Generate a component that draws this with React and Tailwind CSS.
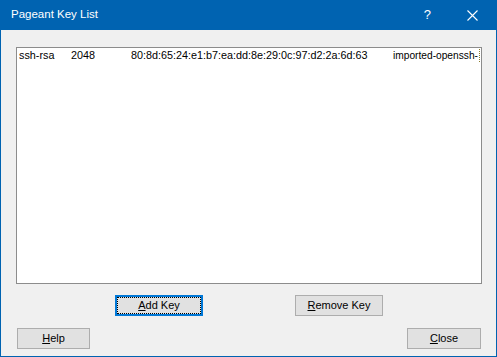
import React from "react";

function DlgButton({ label, hot, focused, className = "" }) {
    const rest = label.slice(1);
    return (
        <button
            className={
                "flex items-center justify-center h-[21px] bg-[#e1e1e1] text-black text-[11px] leading-none " +
                (focused
                    ? "border-2 border-[#0078d7] outline-1 outline-dotted outline-black -outline-offset-3 "
                    : "border border-[#adadad] ") +
                className
            }
        >
            <span className="underline underline-offset-1">{hot}</span>
            {rest}
        </button>
    );
}

export default function App() {
    return (
        <div
            className="w-[497px] h-[357px] flex flex-col bg-[#f0f0f0] border border-t-0 border-[#0063b1] overflow-hidden select-none"
            style={{ fontFamily: '"Liberation Sans", Arial, sans-serif' }}
        >
            {/* Title bar */}
            <div className="h-[30px] shrink-0 -mx-px bg-[#0063b1] flex items-center text-white">
                <span className="ml-[11px] text-[11.5px]">Pageant Key List</span>
                <span className="ml-auto text-[13px] mr-[36px]">?</span>
                <svg width="11" height="11" viewBox="0 0 11 11" className="mr-[19px]">
                    <path d="M0.5 0.5 L10.5 10.5 M10.5 0.5 L0.5 10.5" stroke="white" strokeWidth="1.1" />
                </svg>
            </div>

            {/* Key list */}
            <div className="mt-[17px] ml-[15px] w-[466px] h-[237px] bg-white border border-[#8c8c8c] pt-[1px] pl-[2px]">
                <div className="flex text-[10.8px] leading-[13px] text-black whitespace-nowrap">
                    <span className="w-[52px]">ssh-rsa</span>
                    <span className="w-[60px]">2048</span>
                    <span className="w-[262px]">80:8d:65:24:e1:b7:ea:dd:8e:29:0c:97:d2:2a:6d:63</span>
                    <span className="text-[10.2px] pr-px border-r border-dotted border-[#8a7a2a]">imported-openssh-</span>
                </div>
            </div>

            {/* Add / Remove */}
            <div className="mt-[11px] flex pl-[114px] gap-[92px]">
                <DlgButton label="Add Key" hot="A" focused className="w-[88px]" />
                <DlgButton label="Remove Key" hot="R" className="w-[88px]" />
            </div>

            {/* Help / Close */}
            <div className="mt-[12px] flex justify-between pl-[16px] pr-[15px]">
                <DlgButton label="Help" hot="H" className="w-[73px]" />
                <DlgButton label="Close" hot="C" className="w-[74px]" />
            </div>
        </div>
    );
}
